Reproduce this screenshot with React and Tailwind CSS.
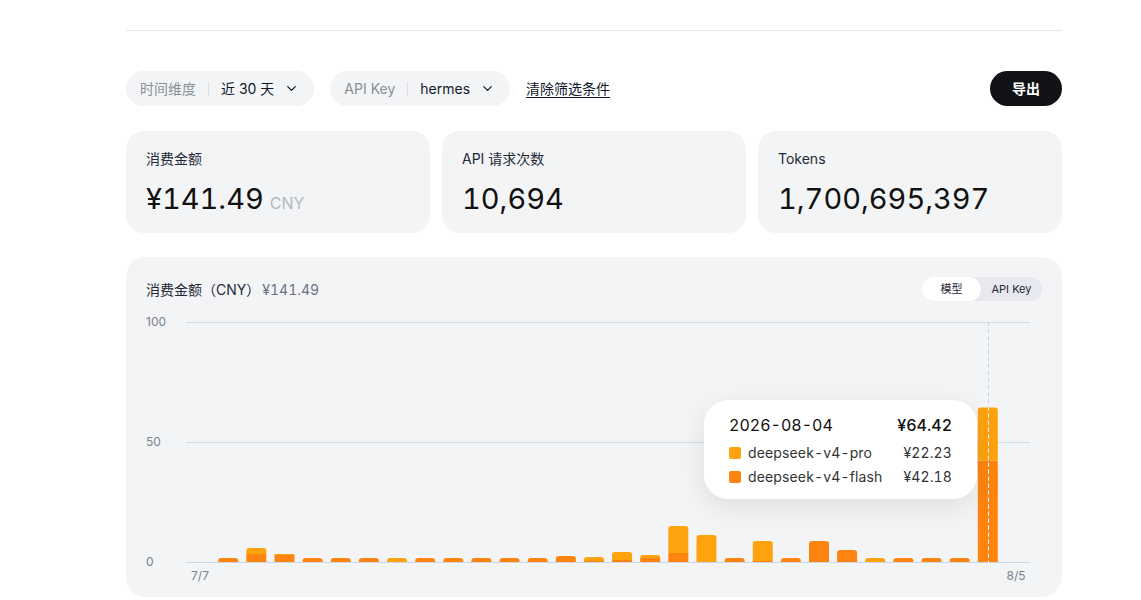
import { ChevronDown } from 'lucide-react';

const PRO = '#fea30e';
const FLASH = '#fd850f';

// [pro, flash] heights in px (2.4px per CNY)
const bars = [
  [0, 0], [0, 4], [6, 8], [1, 7], [0, 4], [0, 4], [0, 4], [4, 0], [0, 4], [0, 4],
  [0, 4], [0, 4], [0, 4], [0, 6], [4, 1], [8, 2], [3, 4], [27, 9], [27, 0], [0, 4],
  [20, 1], [0, 4], [0, 21], [0, 12], [4, 0], [0, 4], [0, 4], [0, 4], [53.4, 101.2], [0, 0],
];

const FilterPill = ({ label, value }) => (
  <div className="flex items-center h-[35px] rounded-full bg-[#f3f4f6] pl-[14px] pr-[15px] text-[14px]">
    <span className="text-[#8a8f98]">{label}</span>
    <span className="mx-3 h-[14px] w-px bg-[#dcdfe4]" />
    <span className="text-[#111827]">{value}</span>
    <ChevronDown className="ml-[10px] text-[#111827]" size={15} strokeWidth={2} />
  </div>
);

const StatCard = ({ label, value, unit }) => (
  <div className="flex-1 h-[102px] rounded-[18px] bg-[#f3f4f6] px-5 pt-[18px]">
    <div className="text-[14px] leading-[20px] text-[#1f2937]">{label}</div>
    <div className="mt-[10px] flex items-baseline gap-[6px]">
      <span className="text-[29px] leading-[40px] text-[#111111] tabular-nums">{value}</span>
      {unit && <span className="text-[16px] text-[#b4b8bf]">{unit}</span>}
    </div>
  </div>
);

// top-rounded rectangle path
const barPath = (x, y, w, h, r) => {
  const rr = Math.min(r, h);
  return `M${x},${y + h} L${x},${y + rr} Q${x},${y} ${x + rr},${y} L${x + w - rr},${y} Q${x + w},${y} ${x + w},${y + rr} L${x + w},${y + h} Z`;
};

const Chart = () => {
  const slot = 844 / 30;
  const base = 250;
  return (
    <svg width="896" height="276" className="block" style={{ fontFamily: 'Inter, "Noto Sans CJK SC", sans-serif' }}>
      {[10, 130].map((y) => (
        <line key={y} x1="40" x2="884" y1={y + 0.5} y2={y + 0.5} stroke="#d6dbe8" strokeWidth="1" />
      ))}
      <line x1="40" x2="884" y1={base + 0.5} y2={base + 0.5} stroke="#cfd5e4" strokeWidth="1" />
      <text x="0" y="14" fontSize="12" fill="#7a8090">100</text>
      <text x="0" y="134" fontSize="12" fill="#7a8090">50</text>
      <text x="0" y="254" fontSize="12" fill="#7a8090">0</text>
      {bars.map(([pro, flash], i) => {
        const cx = 40 + slot * (i + 0.5);
        const x = cx - 10;
        const total = pro + flash;
        if (!total) return null;
        return (
          <g key={i}>
            {flash > 0 && (
              <path d={pro > 0 ? `M${x},${base} L${x},${base - flash} L${x + 20},${base - flash} L${x + 20},${base} Z` : barPath(x, base - flash, 20, flash, 3)} fill={FLASH} />
            )}
            {pro > 0 && <path d={barPath(x, base - total, 20, pro, 3)} fill={PRO} />}
          </g>
        );
      })}
      <line x1="842.5" x2="842.5" y1="10" y2={base} stroke="#c9cee2" strokeWidth="1" strokeDasharray="4 3" />
      <line x1="842.5" x2="842.5" y1="95" y2={base} stroke="#ffffff" strokeOpacity="0.7" strokeWidth="1" strokeDasharray="4 3" />
      <text x="54" y="268" fontSize="12" fill="#7a8090" textAnchor="middle">7/7</text>
      <text x="870" y="268" fontSize="12" fill="#7a8090" textAnchor="middle">8/5</text>
    </svg>
  );
};

const Tooltip = () => (
  <div className="absolute left-[578px] top-[143px] w-[273px] h-[99px] rounded-[24px] bg-white px-[25px] pt-[15px] shadow-[0_8px_28px_rgba(0,0,0,0.09)] tabular-nums">
    <div className="flex items-center justify-between text-[16px] leading-[20px] text-[#111111]">
      <span>2026-08-04</span>
      <span className="font-medium">¥64.42</span>
    </div>
    <div className="mt-[6px] flex flex-col text-[14px] leading-[24px] text-[#333333] tracking-[0.01em]">
      <div className="flex items-center">
        <span className="h-[12px] w-[12px] rounded-[2px]" style={{ background: PRO }} />
        <span className="ml-[7px] flex-1">deepseek-v4-pro</span>
        <span>¥22.23</span>
      </div>
      <div className="flex items-center">
        <span className="h-[12px] w-[12px] rounded-[2px]" style={{ background: FLASH }} />
        <span className="ml-[7px] flex-1">deepseek-v4-flash</span>
        <span>¥42.18</span>
      </div>
    </div>
  </div>
);

export default function App() {
  return (
    <div className="min-h-[600px] bg-white font-['Inter','Noto_Sans_CJK_SC',sans-serif]">
      <div className="ml-[126px] w-[936px] pt-[30px]">
        <div className="h-px bg-[#e5e7eb]" />

        {/* Filters */}
        <div className="mt-[40px] flex items-center">
          <FilterPill label="时间维度" value="近 30 天" />
          <div className="ml-4">
            <FilterPill label="API Key" value="hermes" />
          </div>
          <button className="ml-4 text-[14px] text-[#111827] underline underline-offset-[3px]">清除筛选条件</button>
          <button className="ml-auto h-[35px] w-[72px] rounded-full bg-[#111215] text-[14px] font-semibold text-white">导出</button>
        </div>

        {/* Stats */}
        <div className="mt-[25px] flex gap-3">
          <StatCard label="消费金额" value="¥141.49" unit="CNY" />
          <StatCard label="API 请求次数" value="10,694" />
          <StatCard label="Tokens" value="1,700,695,397" />
        </div>

        {/* Chart */}
        <div className="relative mt-6 rounded-[20px] bg-[#f3f4f6] px-5 pt-5 pb-[9px]">
          <div className="flex h-6 items-center justify-between">
            <div className="flex items-center text-[14px]">
              <span className="text-[#1f2937]">消费金额（CNY）</span>
              <span className="ml-[2px] text-[#6b7280] tabular-nums">¥141.49</span>
            </div>
            <div className="flex h-6 items-center rounded-full bg-[#e8e9ef] text-[11px] text-[#1f2937]">
              <span className="flex h-6 w-[59px] items-center justify-center rounded-full bg-white">模型</span>
              <span className="flex h-6 w-[61px] items-center justify-center">API Key</span>
            </div>
          </div>
          <div className="mt-[11px]">
            <Chart />
          </div>
          <Tooltip />
        </div>
      </div>
    </div>
  );
}
